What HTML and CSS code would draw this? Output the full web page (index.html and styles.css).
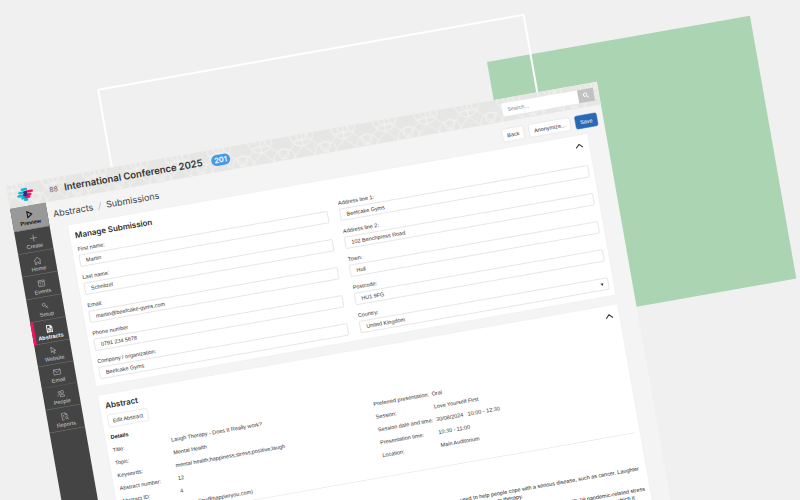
FILE: index.html
```
<!DOCTYPE html>
<html lang="en">
<head>
<meta charset="utf-8">
<title>Manage Submission</title>
<link rel="stylesheet" href="styles.css">
</head>
<body>
<div class="scene">
  <div class="square"></div>
  <div class="outline"></div>
  <div class="window">
    <header class="topbar">
      <svg class="pattern" aria-hidden="true">
        <defs>
          <pattern id="tiles" width="84" height="46" patternUnits="userSpaceOnUse">
            <g fill="none" stroke="#f3f3f1" stroke-width="2">
              <circle cx="55" cy="33" r="10"/>
              <path d="M33 46C33 16 77 16 77 46M18 0C28 18 46 30 62 46M92 0C82 18 64 30 48 46"/>
              <path d="M-13 0A24 24 0 0 0 35 0M71 0A24 24 0 0 0 119 0M0 0A11 11 0 0 0 22 0M84 0A11 11 0 0 0 106 0M11 0V24M-8 12H30M76 12H84M11 24L34 46M11 24L-12 46M95 24L72 46"/>
            </g>
          </pattern>
        </defs>
        <rect width="100%" height="100%" fill="url(#tiles)"/>
      </svg>
      <a class="logo" href="#" aria-label="Home page">
        <svg viewBox="0 0 34 28" width="34" height="28" fill="none" stroke-width="5" stroke-linecap="round">
          <path stroke="#16b4dc" d="M12 4h8M6 10h12M3 16h12M10 21h8"/>
          <path stroke="#ee1560" d="M21 9h10M18 15h9M17 20h7"/>
          <path stroke="#2b2f7d" d="M16 10h3M15 15h4"/>
          <path stroke="#16b4dc" d="M15 25h4"/>
        </svg>
      </a>
      <span class="count">88</span>
      <h1>International Conference 2025</h1>
      <span class="badge">201</span>
      <form class="search">
        <input type="text" placeholder="Search..." aria-label="Search">
        <button type="button" aria-label="Search"><svg viewBox="0 0 16 16" width="14" height="14" fill="none" stroke="#fff" stroke-width="2"><circle cx="6" cy="6" r="4"/><path d="M9 9l5 5"/></svg></button>
      </form>
    </header>
    <div class="body">
      <nav class="sidebar">
        <a class="preview" href="#"><svg viewBox="0 0 16 16"><path d="M4 2l9 6-9 6z"/></svg>Preview</a>
        <a href="#"><svg viewBox="0 0 16 16"><path d="M8 1v14M1 8h14"/></svg>Create</a>
        <a href="#"><svg viewBox="0 0 16 16"><path d="M1 8l7-7 7 7M3 7v8h3v-4h4v4h3V7"/></svg>Home</a>
        <a href="#"><svg viewBox="0 0 16 16"><path d="M2 2h12v12H2zM2 5h12M5 8h2M9 8h2M5 11h2M9 11h2"/></svg>Events</a>
        <a href="#"><svg viewBox="0 0 16 16"><circle cx="5" cy="5" r="3"/><path d="M7 7l6 6M9 11l3-3"/></svg>Setup</a>
        <a class="current" href="#"><svg viewBox="0 0 16 16"><path d="M3 1h7l3 4v10H3zM10 1v4h3M5 7h6M5 10h6M5 13h6"/></svg>Abstracts</a>
        <a class="short" href="#"><svg viewBox="0 0 16 16"><path d="M4 1v11l3-3 2 6 2-1-2-5h4z"/></svg>Website</a>
        <a class="short" href="#"><svg viewBox="0 0 16 16"><path d="M1 3h14v10H1zM1 3l7 6 7-6"/></svg>Email</a>
        <a class="short" href="#"><svg viewBox="0 0 16 16"><circle cx="5" cy="5" r="2"/><circle cx="11" cy="5" r="3"/><path d="M1 13c0-5 6-5 6-2M6 14c0-6 9-6 9 0z"/></svg>People</a>
        <a href="#"><svg viewBox="0 0 16 16"><path d="M7 15H2V1h7l4 4v3M9 1v4h4M4 6h3M4 9h3"/><circle cx="11" cy="11" r="2"/><path d="M12 13l3 2"/></svg>Reports</a>
      </nav>
      <main>
        <div class="pagebar">
          <div class="crumbs"><a href="#">Abstracts</a><i>/</i><span>Submissions</span></div>
          <div class="actions">
            <button type="button">Back</button>
            <button type="button">Anonymize...</button>
            <button type="button" class="primary">Save</button>
          </div>
        </div>
        <section class="card">
          <div class="cardhead"><h2>Manage Submission</h2>
            <button type="button" class="fold" aria-label="Collapse submission"><svg viewBox="0 0 16 10" width="16" height="10"><path d="M1 9l7-7 7 7"/></svg></button></div>
          <div class="fields">
            <div class="column">
              <label>First name:<input type="text" value="Martin"></label>
              <label>Last name:<input type="text" value="Schnitzel"></label>
              <label>Email:<input type="text" value="martin@beefcake-gyms.com"></label>
              <label>Phone number<input type="text" value="0791 234 5678"></label>
              <label>Company / organization:<input type="text" value="Beefcake Gyms"></label>
            </div>
            <div class="column">
              <label>Address line 1:<input type="text" value="Beefcake Gyms"></label>
              <label>Address line 2:<input type="text" value="102 Benchpress Road"></label>
              <label>Town:<input type="text" value="Hull"></label>
              <label>Postcode:<input type="text" value="HU1 9FG"></label>
              <label class="pick">Country:<select><option>United Kingdom</option></select></label>
            </div>
          </div>
        </section>
        <section class="card">
          <div class="cardhead"><h2>Abstract</h2>
            <button type="button" class="fold" aria-label="Collapse abstract"><svg viewBox="0 0 16 10" width="16" height="10"><path d="M1 9l7-7 7 7"/></svg></button></div>
          <button type="button" class="edit">Edit Abstract</button>
          <div class="details">
            <div>
              <h3>Details</h3>
              <dl>
                <dt>Title:</dt><dd>Laugh Therapy - Does It Really work?</dd>
                <dt>Topic:</dt><dd>Mental Health</dd>
                <dt>Keywords:</dt><dd>mental health;happiness;stress;positive;laugh</dd>
                <dt>Abstract number:</dt><dd>12</dd>
                <dt>Abstract ID:</dt><dd>4</dd>
                <dt></dt><dd class="author">(joy@happieryou.com)</dd>
              </dl>
            </div>
            <dl class="session">
              <dt>Preferred presentation:</dt><dd>Oral</dd>
              <dt>Session:</dt><dd>Love Yourself First</dd>
              <dt>Session date and time:</dt><dd>30/08/2024 &nbsp; 10:00 - 12:30</dd>
              <dt>Presentation time:</dt><dd>10:30 - 11:00</dd>
              <dt>Location:</dt><dd>Main Auditorium</dd>
            </dl>
          </div>
          <div class="text">
            <p>used to help people cope with a serious disease, such as cancer. Laughter<span class="second">or therapy.</span></p>
            <p class="wide">COVID-19 pandemic-related stress<span class="third">which it</span></p>
          </div>
        </section>
      </main>
    </div>
  </div>
</div>
</body>
</html>
```
FILE: styles.css
```
* { box-sizing: border-box; }
body { margin: 0; background: #f0f0f0; color: #333; font-family: "Liberation Sans", Arial, sans-serif; }
h1, h2, h3, p, dl, dd { margin: 0; }
a { color: inherit; text-decoration: none; }
button, input, select { font: inherit; color: inherit; }
.scene { position: relative; height: 100vh; overflow: hidden; }

.square, .outline, .window { position: absolute; transform-origin: 0 0; transform: rotate(-10deg); }
.square { left: 487px; top: 62px; width: 267px; height: 267px; background: #abd5b2; }
.outline { left: 97px; top: 89px; width: 434px; height: 240px; border: 2px solid #fff; }

/* The app is laid out at full size and shown at half scale. */
.window {
  left: 6px; top: 186px; width: 150vw; min-height: 1500px;
  display: flex; flex-direction: column;
  background: #f4f4f4; font-size: 11px; line-height: 14px;
  transform: rotate(-10deg) scale(0.5);
}

.topbar { position: relative; display: flex; align-items: center; height: 46px; padding-right: 10px; background: #e6e6e4; }
.pattern { position: absolute; inset: 0; width: 100%; height: 100%; }
.logo, .count, .topbar h1, .badge, .search { position: relative; }
.logo { width: 84px; padding-left: 18px; }
.logo svg { display: block; }
.count { width: 30px; font: 400 14px/20px Inter, sans-serif; color: #555; }
.topbar h1 { font: 600 19px/24px Inter, sans-serif; color: #333; }
.badge { margin-left: 18px; padding: 0 6px; border-radius: 11px; background: #429bea; color: #fff; font: 600 15px/22px Inter, sans-serif; }
.search { display: flex; margin-left: auto; height: 26px; }
.search input { width: 154px; padding: 0 10px; border: 0; background: #fff; font-size: 11px; }
.search input::placeholder { color: #888; }
.search button { display: grid; place-items: center; width: 32px; padding: 0; border: 0; background: #c2c2c2; }

.body { display: flex; flex: 1; }
.sidebar { width: 72px; background: #444; color: #ccc; }
.sidebar a { display: flex; flex-direction: column; align-items: center; height: 46px; padding-top: 10px; border-bottom: 1px solid #7a7a7a; line-height: 12px; }
.sidebar svg { width: 16px; height: 16px; margin-bottom: 2px; fill: none; stroke: currentColor; stroke-width: 1; }
.sidebar .preview { height: 48px; background: #999; color: #111; font-weight: 700; }
.sidebar .preview svg, .sidebar .current svg { stroke-width: 2; }
.sidebar .current { border-left: 6px solid #ee1560; padding-right: 6px; color: #fff; font-weight: 700; }
.sidebar .short { height: 44px; padding-top: 8px; }

main { flex: 1; padding: 0 36px 0 35px; }
.pagebar { display: flex; justify-content: space-between; height: 52px; margin: 0 -24px; padding-top: 14px; }
.crumbs { font: 400 18px/24px Inter, sans-serif; color: #444; }
.crumbs i { margin: 0 10px; color: #bbb; }
.actions { display: flex; gap: 10px; height: 27px; }
button { cursor: pointer; }
.actions button, .edit { padding: 0 9px; border: 1px solid #ddd; border-radius: 4px; background: #fff; }
.actions .primary { border-color: #2a69b5; background: #2a69b5; color: #fff; }

.card { margin-bottom: 17px; padding: 12px 10px 13px 11px; border: 1px solid #e9e9e9; background: #fff; }
.cardhead { display: flex; justify-content: space-between; height: 31px; }
.cardhead h2 { font: 600 16px/20px Inter, sans-serif; color: #2a2a2a; }
.fold { height: 20px; padding: 0 2px; border: 0; background: none; }
.fold path { fill: none; stroke: #222; stroke-width: 2; }
.fields { display: grid; grid-template-columns: 1fr 1fr; gap: 24px; }
.column { display: grid; gap: 14px; }
label { display: grid; gap: 5px; }
label input, select { width: 100%; height: 24px; padding: 0 12px; border: 1px solid #d0d0d0; border-radius: 2px; background: #fff; }
select { appearance: none; }
.pick { position: relative; }
.pick::after { content: ""; position: absolute; right: 10px; bottom: 9px; border: 3px solid transparent; border-top: 5px solid #333; border-bottom: 0; }

.edit { display: block; height: 26px; margin-top: -2px; border-radius: 4px; }
.details { display: grid; grid-template-columns: 1fr 1fr; gap: 24px; margin-top: 12px; height: 180px; }
.details h3 { font-size: 11px; line-height: 14px; color: #111; margin-bottom: 6px; }
dl { display: grid; grid-template-columns: 118px 1fr; grid-auto-rows: 26px; line-height: 26px; }
.session { align-self: start; margin-top: 20px; }
.author { padding-left: 32px; }
.text { border-top: 1px solid #ddd; padding: 64px 5px 0 0; color: #222; text-align: right; }
.text p { margin: 0 0 14px; }
.text span { display: block; }
.text .wide { margin-right: -5px; }
.second { padding-right: 238px; }
.third { padding-right: 23px; }
```
